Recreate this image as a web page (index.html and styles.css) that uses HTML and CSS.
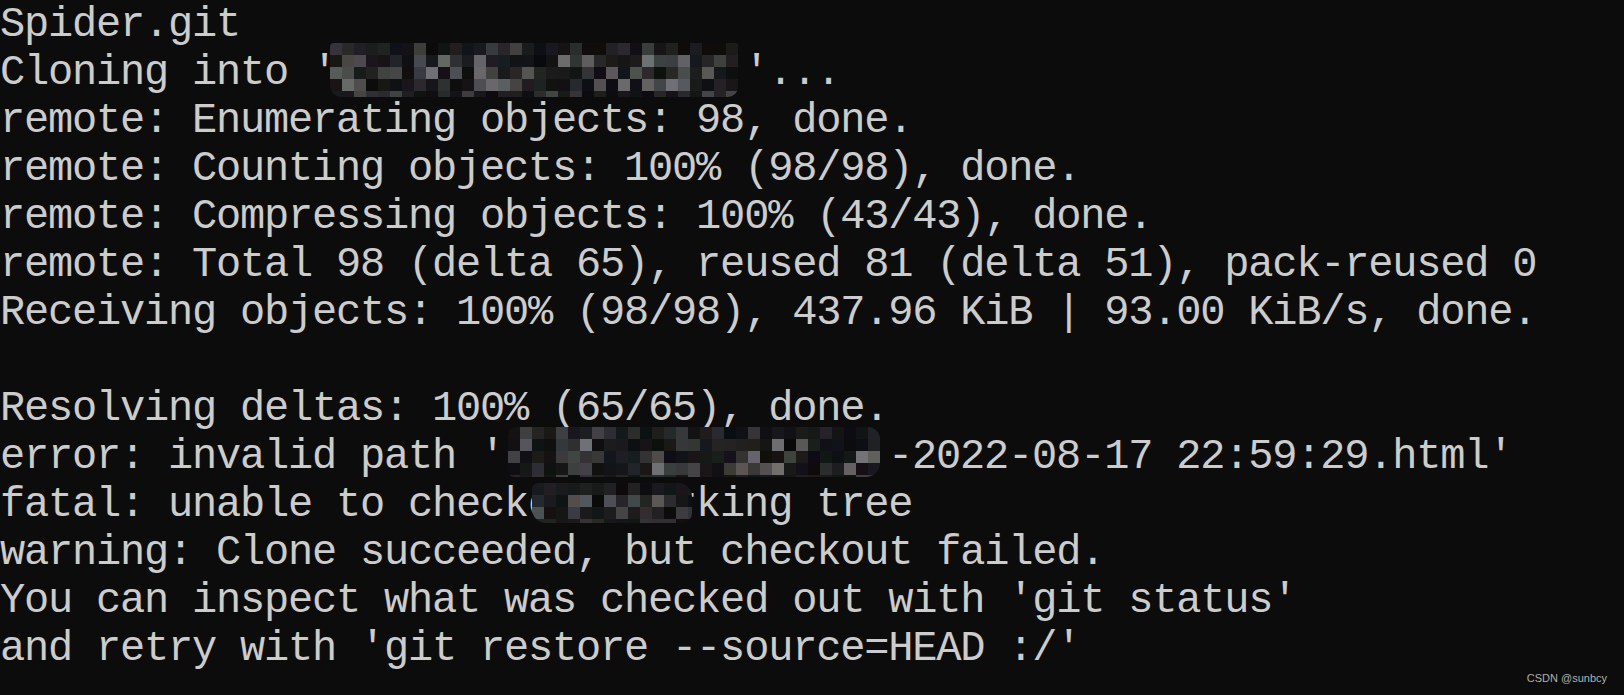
FILE: index.html
```html
<!DOCTYPE html>
<html>
<head>
<meta charset="utf-8">
<link rel="stylesheet" href="styles.css">
</head>
<body>
<div class="term">
<div class="ln">Spider.git</div>
<div class="ln">Cloning into '<span class="hide w17"><span class="mosaic m1" data-seed="7" data-cols="34" data-rows="5"></span></span>'...</div>
<div class="ln">remote: Enumerating objects: 98, done.</div>
<div class="ln">remote: Counting objects: 100% (98/98), done.</div>
<div class="ln">remote: Compressing objects: 100% (43/43), done.</div>
<div class="ln">remote: Total 98 (delta 65), reused 81 (delta 51), pack-reused 0</div>
<div class="ln">Receiving objects: 100% (98/98), 437.96 KiB | 93.00 KiB/s, done.</div>
<div class="ln"> </div>
<div class="ln">Resolving deltas: 100% (65/65), done.</div>
<div class="ln">error: invalid path '<span class="hide w16"><span class="mosaic m2" data-seed="31" data-cols="31" data-rows="5"></span></span>-2022-08-17 22:59:29.html'</div>
<div class="ln">fatal: unable to checko<span class="hide w5"><span class="mosaic m3" data-seed="53" data-cols="14" data-rows="4" data-dark="1"></span></span>rking tree</div>
<div class="ln">warning: Clone succeeded, but checkout failed.</div>
<div class="ln">You can inspect what was checked out with 'git status'</div>
<div class="ln">and retry with 'git restore --source=HEAD :/'</div>
</div>
<div class="mark">CSDN @sunbcy</div>
<script src="mosaic.js"></script>
</body>
</html>
```

FILE: styles.css
```css
html, body {
  margin: 0;
  padding: 0;
  background: #0c0c0c;
}
body {
  width: 1624px;
  height: 695px;
  overflow: hidden;
  position: relative;
}
.term {
  font-family: "Liberation Mono", "DejaVu Sans Mono", monospace;
  font-size: 42px;
  letter-spacing: -1.2px;
  line-height: 48px;
  color: #cccccc;
  padding-top: 1px;
}
.ln {
  height: 48px;
  white-space: pre;
}
.hide {
  display: inline-block;
  position: relative;
  height: 48px;
  vertical-align: top;
}
.w17 { width: 408px; }
.w16 { width: 384px; }
.w5 { width: 120px; }
.mosaic {
  position: absolute;
  display: grid;
  grid-auto-rows: 12px;
  overflow: hidden;
}
.mosaic i {
  display: block;
  width: 12px;
  height: 12px;
}
.m1 {
  left: -6px;
  top: -6px;
  width: 408px;
  height: 54px;
  border-radius: 4px 2px 10px 12px;
}
.m2 {
  left: 4px;
  top: -6px;
  width: 372px;
  height: 50px;
  border-radius: 8px 12px 14px 6px;
}
.m3 {
  left: -20px;
  top: 2px;
  width: 160px;
  height: 40px;
  border-radius: 6px 14px 10px 14px;
}
.mark {
  position: absolute;
  right: 17px;
  bottom: 10px;
  font-family: "Liberation Sans", Arial, sans-serif;
  font-size: 11px;
  line-height: 13px;
  color: #b0b0b0;
}
```

FILE: mosaic.js
```js
(function () {
  function rng(seed) {
    var s = seed;
    return function () {
      s = (s * 1103515245 + 12345) % 2147483648;
      return s / 2147483648;
    };
  }
  var list = document.querySelectorAll('.mosaic');
  for (var k = 0; k < list.length; k++) {
    var el = list[k];
    var cols = parseInt(el.getAttribute('data-cols'), 10);
    var rows = parseInt(el.getAttribute('data-rows'), 10);
    var dark = el.getAttribute('data-dark') === '1';
    var r = rng(parseInt(el.getAttribute('data-seed'), 10) * 7919 + 17);
    for (var i = 0; i < 10; i++) r();
    el.style.gridTemplateColumns = 'repeat(' + cols + ', 12px)';
    for (var y = 0; y < rows; y++) {
      for (var x = 0; x < cols; x++) {
        var v = r();
        var edge = (y === 0 || y === rows - 1) ? 0.5 : 1;
        if (dark) edge *= (y < 1 ? 0.25 : 0.75);
        var b;
        if (v < 0.45) {
          b = 12 + Math.floor(r() * 16);
        } else {
          b = 24 + Math.floor(Math.pow(r(), 1.3) * 92 * edge);
        }
        var tr = b + Math.floor((r() - 0.5) * 8);
        var tg = b + Math.floor((r() - 0.5) * 6);
        var tb = b + Math.floor((r() - 0.3) * 10);
        var c = document.createElement('i');
        c.style.background = 'rgb(' + tr + ',' + tg + ',' + tb + ')';
        el.appendChild(c);
      }
    }
  }
})();
```
